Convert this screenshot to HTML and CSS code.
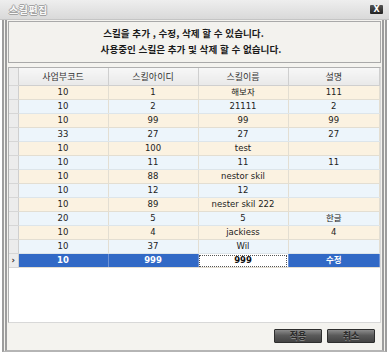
FILE: index.html
```html
<!DOCTYPE html>
<html lang="ko">
<head>
<meta charset="utf-8">
<title>스킬편집</title>
<link rel="stylesheet" href="styles.css">
</head>
<body>
<div class="titlebar">
  <span class="title">스킬편집</span>
  <span class="close">X</span>
</div>
<div class="window">
  <div class="msg">
    <p class="l1">스킬을 추가 , 수정, 삭제 할 수 있습니다.</p>
    <p class="l2">사용중인 스킬은 추가 및 삭제 할 수 없습니다.</p>
  </div>
  <div class="grid">
    <table>
      <colgroup><col class="c0"><col class="c1"><col class="c2"><col class="c3"><col class="c4"></colgroup>
      <thead>
        <tr><th class="rh"></th><th>사업부코드</th><th>스킬아이디</th><th>스킬이름</th><th>설명</th></tr>
      </thead>
      <tbody>
        <tr class="odd"><td class="rh"></td><td>10</td><td>1</td><td>해보자</td><td>111</td></tr>
        <tr class="even"><td class="rh"></td><td>10</td><td>2</td><td>21111</td><td>2</td></tr>
        <tr class="odd"><td class="rh"></td><td>10</td><td>99</td><td>99</td><td>99</td></tr>
        <tr class="even"><td class="rh"></td><td>33</td><td>27</td><td>27</td><td>27</td></tr>
        <tr class="odd"><td class="rh"></td><td>10</td><td>100</td><td>test</td><td></td></tr>
        <tr class="even"><td class="rh"></td><td>10</td><td>11</td><td>11</td><td>11</td></tr>
        <tr class="odd"><td class="rh"></td><td>10</td><td>88</td><td>nestor skil</td><td></td></tr>
        <tr class="even"><td class="rh"></td><td>10</td><td>12</td><td>12</td><td></td></tr>
        <tr class="odd"><td class="rh"></td><td>10</td><td>89</td><td>nester skil 222</td><td></td></tr>
        <tr class="even"><td class="rh"></td><td>20</td><td>5</td><td>5</td><td>한글</td></tr>
        <tr class="odd"><td class="rh"></td><td>10</td><td>4</td><td>jackiess</td><td>4</td></tr>
        <tr class="even"><td class="rh"></td><td>10</td><td>37</td><td>Wil</td><td></td></tr>
        <tr class="sel"><td class="rh">›</td><td>10</td><td>999</td><td class="focus">999</td><td>수정</td></tr>
      </tbody>
    </table>
  </div>
  <div class="footer">
    <button class="btn">적용</button>
    <button class="btn">취소</button>
  </div>
</div>
</body>
</html>
```

FILE: styles.css
```css
html, body {
  margin: 0;
  padding: 0;
}
body {
  width: 389px;
  height: 356px;
  overflow: hidden;
  background: #ffffff;
  font-family: "DejaVu Sans", "Noto Sans CJK KR", sans-serif;
  color: #222;
}
.titlebar {
  height: 20px;
  box-sizing: border-box;
  display: flex;
  align-items: center;
  justify-content: space-between;
  padding: 0 6px 0 9px;
  background: linear-gradient(#eeeeee, #d9d9d9);
  border-bottom: 1px solid #c4c4c4;
}
.title {
  font-family: "Noto Sans CJK KR", sans-serif;
  font-size: 10px;
  font-weight: 700;
  color: #f8f8f8;
  text-shadow: 1px 0 0 #a2a2a2, -1px 0 0 #a2a2a2, 0 1px 0 #a2a2a2, 0 -1px 0 #a2a2a2;
  letter-spacing: 0.5px;
}
.close {
  width: 13px;
  height: 9px;
  background: linear-gradient(#555, #222);
  border-radius: 1px;
  color: #fff;
  font-size: 8px;
  font-weight: 700;
  line-height: 9px;
  text-align: center;
}
.window {
  margin-left: 2px;
  width: 385px;
  height: 332px;
  box-sizing: border-box;
  border-left: 5px double #9d9d9d;
  border-right: 5px double #9d9d9d;
  border-bottom: 2px solid #b5b5b5;
  background: #f4f3ef;
  padding: 1px 1px 0;
  display: flex;
  flex-direction: column;
}
.msg {
  height: 42px;
  box-sizing: border-box;
  border: 1px solid #a9a9a9;
  background: #f3f2ee;
  padding-top: 3px;
  text-align: center;
  font-family: "Noto Sans CJK KR", sans-serif;
  font-size: 9.6px;
  font-weight: 700;
  color: #1a1a1a;
}
.msg p {
  margin: 0;
  height: 16px;
  line-height: 16px;
}
.msg .l1 { padding-right: 22px; }
.msg .l2 { padding-right: 7px; }
.grid {
  margin-top: 4px;
  height: 256px;
  box-sizing: border-box;
  background: #ffffff;
  border: 1px solid #b0b0b0;
  border-right-color: #d8d8d8;
  border-bottom-color: #d8d8d8;
}
table {
  width: 100%;
  border-collapse: collapse;
  table-layout: fixed;
  font-size: 8.5px;
}
col.c0 { width: 9px; }
col.c1 { width: 90px; }
col.c2 { width: 90px; }
col.c3 { width: 90px; }
th {
  height: 17px;
  padding: 0;
  font-family: "Noto Sans CJK KR", sans-serif;
  font-weight: 400;
  font-size: 9px;
  color: #333;
  background: linear-gradient(#f7f7f7, #e9e9e9);
  border-right: 1px solid #cfcfcf;
  border-bottom: 1px solid #cfcfcf;
}
td {
  height: 13px;
  padding: 0;
  text-align: center;
  line-height: 13px;
  border-right: 1px solid #e3ded2;
  border-bottom: 1px solid #e3ded2;
  white-space: nowrap;
  overflow: hidden;
}
.rh {
  background: #ececec;
  border-right: 1px solid #cfcfcf;
  border-bottom: 1px solid #d6d6d6;
  color: #333;
  font-weight: 700;
}
tr.odd td:not(.rh) { background: #fbf2e1; }
tr.even td:not(.rh) { background: #edf5fb; border-bottom-color: #dde5ea; }
tr.sel td:not(.rh) {
  background: #3169c6;
  color: #ffffff;
  font-weight: 700;
  border-right-color: #6e93d6;
}
tr.sel td.focus {
  background: #ffffff;
  color: #111;
  outline: 1px dotted #555;
  outline-offset: -2px;
}
.footer {
  flex: 1;
  display: flex;
  justify-content: flex-end;
  align-items: flex-start;
  gap: 5px;
  padding: 6px 6px 0 0;
}
.btn {
  width: 48px;
  height: 14px;
  padding: 0;
  border: 1px solid #2e2e2e;
  border-radius: 1px;
  background: linear-gradient(#8c8c8c, #5a5a5a 45%, #444 100%);
  font-family: "Noto Sans CJK KR", sans-serif;
  font-size: 9px;
  font-weight: 700;
  line-height: 12px;
  color: #2a2a2a;
  text-shadow: 0 1px 0 #8a8a8a;
}
```
